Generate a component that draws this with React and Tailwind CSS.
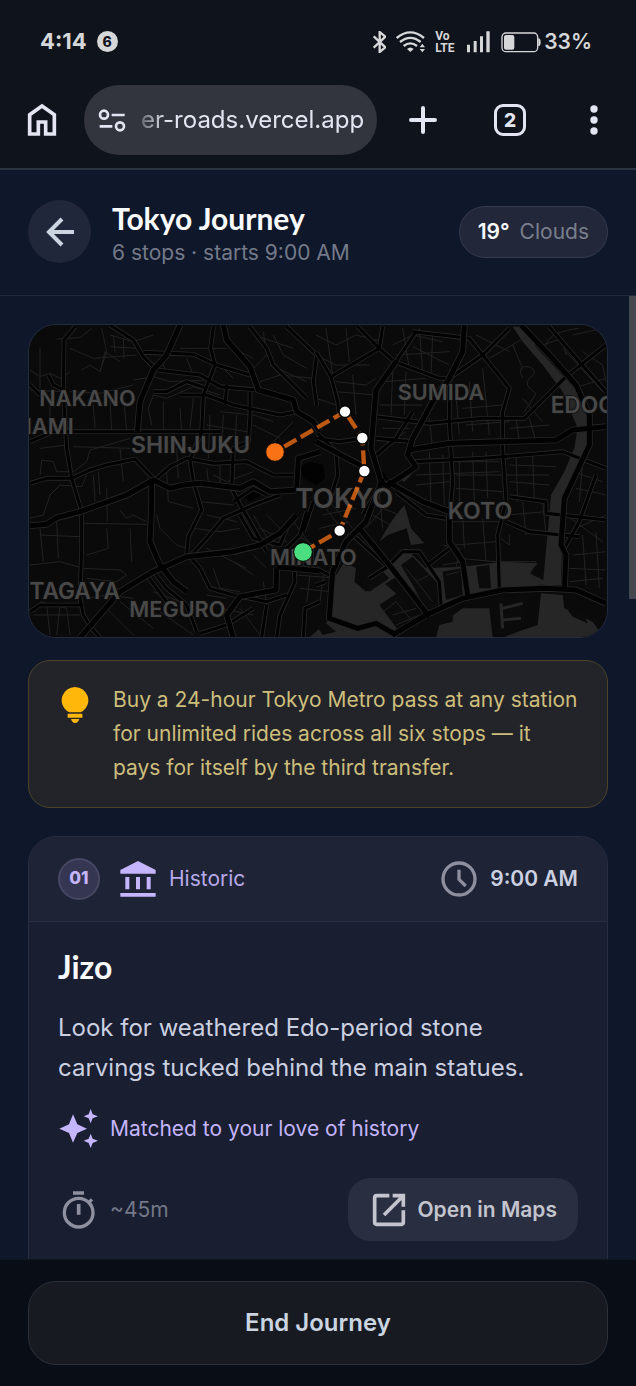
import React from "react";

const westStreets = [
  "M30 165 L60 185 L90 175 L120 190 L150 172", "M110 72 L180 68 L215 40", "M185 165 L210 150 L240 170 L255 110 L300 140",
  "M245 40 L260 110 L240 170", "M270 60 L340 80 L400 60", "M150 100 L220 130 L350 120", "M340 195 L400 185 L450 200 L560 195",
  "M395 330 L385 280 L400 240 L440 250 L520 215 L600 240", "M60 480 L65 435 L100 440 L110 470 L160 470 L200 440 L210 405 L280 385 L330 370",
  "M30 610 L70 600 L90 540 L120 510 L185 515 L200 480", "M300 585 L320 610 L340 600 L380 620", "M190 625 L380 628", "M260 520 L262 620",
  "M410 600 L420 640 L470 690 L500 700", "M30 750 L120 740 L190 760 L300 765 L320 780 L290 800 L200 790", "M60 660 L180 665",
  "M235 470 L240 540", "M440 470 L445 560 L520 580", "M30 225 L130 230", "M150 230 L240 235 L340 210", "M60 400 L140 390", "M160 395 L330 400",
  "M420 130 L440 170", "M480 100 L620 100", "M500 130 L520 180", "M620 90 L700 130", "M600 150 L640 190", "M730 50 L740 120 L700 160",
  "M760 60 L790 120 L860 160", "M700 60 L820 100", "M750 150 L860 200", "M720 200 L780 180 L880 190", "M600 290 L700 300 L760 320",
  "M560 330 L680 350", "M740 400 L820 320", "M700 330 L780 370", "M580 480 L620 500 L700 470", "M540 560 L640 570", "M560 600 L650 620",
  "M520 640 L600 650 L660 640", "M60 860 L140 880 L150 960", "M40 900 L180 900", "M80 870 L90 960", "M120 870 L110 960", "M200 850 L260 840 L340 850",
  "M260 880 L340 960", "M300 860 L400 940", "M400 830 L480 860", "M420 890 L520 960", "M560 840 L620 850", "M580 760 L600 820 L660 830",
  "M640 740 L700 780", "M700 720 L740 760", "M560 700 L680 760", "M720 640 L800 680", "M740 600 L780 640", "M600 880 L700 900", "M660 880 L720 960",
  "M730 800 L740 870", "M790 760 L860 740", "M820 620 L880 700", "M830 660 L880 690", "M60 100 L60 220", "M90 250 L90 340", "M220 270 L225 340",
  "M270 250 L275 350", "M310 240 L320 345", "M430 260 L430 350", "M480 280 L485 350", "M470 400 L475 490", "M560 460 L565 500", "M600 450 L600 510",
  "M220 480 L225 560", "M300 400 L310 500", "M260 640 L265 700 L200 720", "M330 640 L335 740", "M60 640 L70 740", "M110 620 L115 730",
  "M280 60 L285 110", "M310 70 L312 130", "M270 95 L350 100", "M520 250 L510 340", "M610 300 L605 380", "M650 300 L645 390", "M570 300 L565 430",
  "M700 600 L760 700", "M850 700 L850 760", "M880 700 L880 760", "M830 780 L950 790", "M840 820 L930 830", "M870 780 L860 860", "M910 780 L900 860",
];

const eastStreets = [
  "M0 60 L60 90 L120 60 L200 80", "M30 40 L50 180", "M90 40 L100 140", "M0 120 L60 150 L160 150", "M60 200 L150 210 L180 190", "M110 180 L120 300",
  "M60 230 L180 240", "M0 250 L60 270", "M230 90 L290 60 L380 80", "M260 40 L280 160", "M310 40 L320 170", "M350 60 L345 180", "M240 120 L400 110",
  "M290 95 L400 150", "M210 200 L330 190", "M230 170 L225 300", "M270 170 L265 300", "M190 270 L320 270", "M200 340 L280 340", "M200 400 L270 350",
  "M420 240 L430 360", "M460 200 L470 350", "M500 160 L520 360", "M440 280 L560 270", "M450 330 L580 320", "M340 310 L350 400", "M580 340 L700 330",
  "M600 310 L610 380", "M640 310 L660 380", "M480 60 L580 110", "M520 130 L640 60", "M590 90 L620 160", "M680 90 L740 70 L750 120",
  "M620 190 Q600 150 640 155 Q670 170 640 190 Q620 210 660 235 Q640 270 625 290", "M690 90 Q700 50 790 40", "M770 60 L860 40", "M800 110 L860 150",
  "M740 100 L860 230", "M620 250 L680 320", "M770 220 L870 190", "M860 150 L870 200", "M310 440 L550 440", "M300 480 L550 470", "M580 450 L720 455",
  "M300 510 L400 500", "M430 440 L430 560", "M470 410 L475 560", "M510 410 L515 550", "M340 410 L345 570", "M380 420 L385 570", "M600 420 L605 560",
  "M650 420 L655 560", "M420 480 L700 480", "M420 520 L560 530", "M580 500 L700 510", "M410 620 L550 620", "M440 600 L445 700", "M500 610 L510 740",
  "M420 690 L540 680", "M430 730 L540 740", "M555 670 L580 690 L580 660", "M550 740 L660 740 L640 780 L680 810", "M570 600 L690 590", "M620 560 L630 660",
  "M680 560 L690 660", "M770 470 L860 500", "M780 520 L870 540", "M800 440 L790 560", "M750 600 L860 680", "M780 640 L870 600", "M760 760 L870 765",
  "M770 720 L870 710", "M800 660 L810 810", "M840 650 L850 820", "M760 800 L860 790", "M150 560 L250 600", "M170 600 L240 640", "M190 540 L200 640",
  "M150 640 L210 570", "M30 580 L90 660", "M20 600 L120 580", "M10 640 L100 620", "M40 560 L110 640", "M380 690 L430 700 L420 760", "M380 750 L440 740",
  "M390 780 L430 770", "M230 760 L310 870", "M270 760 L350 860", "M300 800 L340 780", "M230 900 L300 880", "M240 930 L310 900", "M190 900 L240 860 L290 920",
];

const mediumWest = [
  "M165 35 L132 75 L130 230 L140 400 L155 490 L185 590 L185 700 L180 850 L190 900 L215 940 L240 968",
  "M270 30 L340 75 L370 125 L410 165 L540 180 L600 215 L710 225", "M370 112 L520 118 L590 150 L690 180", "M580 35 L572 100 L585 150 L550 240 L545 350 L510 435 L520 500 L545 585 L505 665 L500 720",
  "M30 380 L100 350 L350 350 L600 350", "M30 505 L80 490 L155 490 L210 465 L260 450 L345 432 L400 490", "M480 240 L560 240 L640 270 L780 300 L830 290",
  "M410 490 L450 455 L500 430 L580 445 L680 440 L760 480 L830 480", "M690 230 L690 300 L685 380 L640 400 L635 520 L660 570 L690 620 L740 710",
  "M800 35 L890 120 L880 200 L890 270", "M690 35 L740 100 L760 150 L860 250", "M505 730 L560 670 L610 610 L700 570 L780 540",
  "M400 770 L440 820 L500 870 L530 950", "M505 720 L540 760 L570 820 L640 840 L740 860 L800 840", "M30 890 L60 870 L190 870",
  "M660 600 L700 670 L780 690 L800 640", "M820 720 L825 800 L780 900 L770 968", "M740 870 L725 968", "M850 968 L855 880 L900 860", "M540 955 L620 930 L700 880",
  "M85 180 L100 210 L130 225", "M30 210 L60 240", "M640 560 L700 520 L740 540", "M860 590 L840 660 L800 700", "M880 560 L850 650",
  "M400 230 L440 230 L500 200 L560 220", "M620 210 L615 270", "M380 780 L440 860",
];

const mediumEast = [
  "M125 35 L190 100 L235 140 L370 190 L410 190", "M0 110 L45 185 L65 260 L70 300", "M45 185 L190 100 L200 35", "M300 50 L240 140 L185 215",
  "M290 50 L460 70 L500 120 L580 220 L560 290 L560 400 L570 560 L545 660 L550 820", "M400 190 L500 120 L580 40",
  "M180 305 L340 325 L500 310 L625 310 L750 185 L870 90", "M180 370 L290 380", "M0 370 L70 380 L140 370", "M400 200 L400 320 L410 500 L400 620",
  "M290 440 L500 430 L560 425 L740 410 L870 460", "M580 545 L690 560 L690 595 L870 615", "M570 620 L640 650 L790 665",
  "M700 35 L790 140 L870 230", "M140 450 L60 410 L0 350", "M60 410 L65 480 L40 560", "M240 530 L330 600 L390 610", "M840 480 L790 620 L745 700",
  "M110 660 L215 755 L260 710 L310 710 L370 800 L375 870", "M215 755 L160 790", "M335 750 L400 700", "M180 420 L240 370 L290 290",
  "M0 760 L40 780", "M0 810 L30 800", "M140 600 L170 550 L220 500",
];

const wideWest = [
  "M30 632 L80 628 L110 608 L180 590 L320 540 L400 495 L430 510 L450 520 L490 510 L540 505 L660 520 L700 500 L750 530 L830 525",
  "M480 30 L440 120 L400 165 L360 260 L352 350", "M395 490 L395 570 L390 680 L420 750 L460 800 L500 830",
  "M610 30 L620 75 L690 155 L715 225 L820 255 L830 290 L880 320 L900 350", "M180 968 L300 830 L400 770 L500 725 L640 710 L720 690 L780 655 L830 600",
  "M770 760 L768 825 L660 845 L620 900 L640 968", "M770 755 L900 768", "M830 520 L835 430 L900 410",
];

const wideEast = [
  "M445 30 L440 110 L400 190 L350 260 L290 370 L275 420 L300 455 L225 505", "M240 140 L180 225 L165 400 L195 500 L220 520",
  "M280 405 L400 385 L720 375 L770 345 L870 335", "M615 30 L700 120 L780 210 L820 300 L820 390 L745 550 L735 690 L750 720 L745 820",
  "M230 960 L330 900 L440 850 L560 825 L690 820 L780 825 L870 865", "M215 500 L320 560 L400 590", "M130 640 L220 750 L340 905",
  "M400 600 L400 680 L440 740 L455 840", "M200 490 L150 620 L90 680 L50 770 L40 910 L125 940 L180 925 L240 960", "M0 380 L150 460",
];

function Casing({ paths, width }) {
  return (
    <g fill="none" strokeLinejoin="round">
      <g stroke="#262626" strokeWidth={width + 5}>{paths.map((d) => <path key={d} d={d} />)}</g>
      <g stroke="#020202" strokeWidth={width}>{paths.map((d) => <path key={d} d={d} />)}</g>
    </g>
  );
}

function RouteMap() {
  const stops = [[975, 290], [1027, 369], [1033, 468], [959, 647]];
  return (
    <svg viewBox="27 30 1734 936" preserveAspectRatio="xMidYMid slice" className="block aspect-[578/312] w-full" role="img" aria-label="Route map of central Tokyo">
      <rect x="0" y="0" width="1800" height="1000" fill="#0a0a0a" />
      <g transform="translate(888 0)" fill="#262626">
        <path d="M590 35 L625 35 L660 95 L710 150 L775 220 L810 290 L825 340 L810 400 L775 470 L745 530 L740 620 L735 810 L680 815 L700 600 L705 540 L745 470 L775 400 L785 340 L740 230 L680 150 L620 80Z" />
        <path d="M85 740 L120 760 L115 800 L150 830 L200 800 L290 880 L240 968 L-20 968 L0 950 L45 910 L55 790Z" />
        <path d="M150 790 L200 755 L240 740 L270 700 L290 720 L330 760 L440 755 L560 740 L665 745 L640 775 L700 805 L440 850 L340 880 L250 780 L170 830Z" />
        <path d="M370 930 L440 880 L520 880 L530 968 L360 968Z M675 835 L740 840 L745 880 L830 920 L865 968 L560 968 L620 945 L665 930Z" />
        <path d="M265 570 L285 640 L325 685 L285 690 L272 640 L215 660 L190 680 L225 620Z M240 490 L290 475 L265 500Z" />
        <path fill="#0b0b0b" d="M130 800 L195 765 L220 790 L160 830Z M255 750 L290 725 L370 810 L380 880 L330 880Z M380 770 L435 760 L440 840 L390 855Z M480 755 L520 750 L525 820 L490 820Z M540 850 L640 838 L630 940 L545 960Z M190 870 L250 830 L310 900 L250 950Z M355 890 L410 870 L410 920 L370 930Z M745 870 L800 890 L815 925 L770 905Z M0 930 L30 925 L60 950 L20 960Z" />
        <path stroke="#262626" strokeWidth="9" fill="none" d="M560 880 L620 865 M560 915 L615 910 M555 865 L560 940" />
      </g>
      <g fill="none" stroke="#222" strokeWidth="3">
        {westStreets.map((d) => <path key={d} d={d} />)}
        <g transform="translate(888 0)">{eastStreets.map((d) => <path key={d} d={d} />)}</g>
      </g>
      <path fill="#020202" d="M665 540 L705 523 L725 540 L690 560Z M840 455 L870 440 L910 450 L915 490 L890 510 L850 490Z M1060 475 L1090 470 L1115 510 L1085 515Z" />
      <Casing paths={mediumWest} width={9} />
      <g transform="translate(888 0)"><Casing paths={mediumEast} width={9} /></g>
      <Casing paths={wideWest} width={15} />
      <g transform="translate(888 0)"><Casing paths={wideEast} width={15} /></g>
      <g fill="#484848" stroke="#101010" strokeWidth="5" paintOrder="stroke" fontFamily="Inter, sans-serif" fontWeight="600" fontSize="65">
        <text x="58" y="272">NAKANO</text>
        <text x="161" y="358" textAnchor="end">NAMI</text>
        <text x="333" y="413" fontSize="69">SHINJUKU</text>
        <text x="300" y="853" textAnchor="end" fontSize="68">TAGAYA</text>
        <text x="328" y="907">MEGURO</text>
        <text x="826" y="578" fontSize="83">TOKYO</text>
        <text x="750" y="749" fontSize="65">MINATO</text>
        <text x="1133" y="254">SUMIDA</text>
        <text x="1592" y="293" fontSize="68">EDOGAWA</text>
        <text x="1283" y="611" fontSize="69">KOTO</text>
      </g>
      <path d="M765 411 L975 290 L1027 369 L1033 468 L959 647 L849 711" fill="none" stroke="#f97316" strokeOpacity=".75" strokeWidth="13" strokeDasharray="42 15" strokeDashoffset="-32" strokeLinejoin="round" />
      {stops.map(([x, y]) => <circle key={`${x}-${y}`} cx={x} cy={y} r="18" fill="#fff" stroke="#080808" strokeWidth="5" />)}
      <circle cx="765" cy="411" r="28" fill="#f97316" stroke="#080808" strokeWidth="3" />
      <circle cx="849" cy="711" r="28" fill="#4ade80" stroke="#080808" strokeWidth="3" />
    </svg>
  );
}

function StatusBar() {
  return (
    <div className="flex h-[85px] items-center pr-11 pb-[2px] pl-10 text-[#d6d7d9]">
      <span className="text-[22px] font-bold">4:14</span>
      <span className="ml-[10px] flex size-[21px] items-center justify-center rounded-full bg-[#d6d7d9] text-sm font-extrabold text-[#0f131b]">6</span>
      <div className="ml-auto flex items-center gap-[10px]">
        <svg viewBox="165 92 39 66" className="h-[22px] w-[13px]" fill="none" stroke="currentColor" strokeWidth="7" aria-label="Bluetooth"><path d="M167 108 L202 141 L185 155 L185 95 L202 109 L167 142" /></svg>
        <svg viewBox="234 92 87 66" className="h-[22px] w-[29px]" aria-label="Wi-Fi">
          <g fill="none" stroke="currentColor" strokeWidth="7"><path d="M236 113 Q277 79 318 113" /><path d="M246 125 Q277 100 308 125" /><path d="M257 137 Q277 121 297 137" /></g>
          <path d="M267 146 Q277 137 287 146 L277 155Z M305 141 L313 130 L321 141Z M305 146 L313 156 L321 146Z" fill="currentColor" />
        </svg>
        <span className="flex w-5 flex-col font-['Roboto'] text-[12px] leading-3 font-bold"><span>Vo</span><span>LTE</span></span>
        <svg viewBox="441 92 75 66" className="h-[22px] w-[25px]" fill="currentColor" aria-label="Signal"><path d="M447 133h9v23h-9z M467 122h9v34h-9z M486 108h9v48h-9z M505 93h10v63h-10z" /></svg>
        <div className="flex items-center gap-[3px]">
          <svg viewBox="546 92 123 66" className="h-[22px] w-[41px]" aria-label="Battery"><rect x="552" y="98" width="107" height="56" rx="12" fill="none" stroke="currentColor" strokeWidth="4" /><rect x="558" y="104" width="31" height="44" rx="6" fill="currentColor" /><path d="M661 114 Q668 114 668 126 Q668 138 661 138Z" fill="currentColor" /></svg>
          <span className="text-[21px] font-semibold">33%</span>
        </div>
      </div>
    </div>
  );
}

function BrowserBar() {
  return (
    <div className="flex items-center border-b-2 border-[#2b323f] pr-[30px] pb-[13px] pl-[27px] text-[#e3e6f2]">
      <button aria-label="Home"><svg viewBox="81 309 90 102" className="block h-[34px] w-[30px]" fill="none" stroke="currentColor" strokeWidth="11"><path d="M89 402 V344 L126 318 L163 344 V402 H137 V366 H115 V402Z" /></svg></button>
      <div className="ml-[27px] flex h-[70px] min-w-0 flex-1 items-center rounded-full bg-[#32353e] pr-[13px] pl-[14px]">
        <svg viewBox="294 321 84 72" className="h-6 w-7 shrink-0" fill="none" stroke="currentColor" strokeWidth="8"><circle cx="312" cy="341" r="12" /><path d="M335 342H374 M299 376H337" /><circle cx="360" cy="376" r="12" /></svg>
        <input aria-label="Address" readOnly value="er-roads.vercel.app" className="ml-[15px] w-full min-w-0 bg-transparent text-[24px] outline-none [mask-image:linear-gradient(to_right,rgba(0,0,0,.3),#000_24px)]" />
      </div>
      <button aria-label="New tab" className="ml-[31px]"><svg viewBox="0 0 30 30" className="block size-[30px]" stroke="currentColor" strokeWidth="4" strokeLinecap="round"><path d="M15 3V27M3 15H27" /></svg></button>
      <button aria-label="Tabs" className="ml-14 flex size-8 items-center justify-center rounded-[9px] border-[3px] border-[#e3e6f2] text-[19px] leading-none font-extrabold">2</button>
      <button aria-label="More" className="ml-14 flex w-6 justify-center"><svg viewBox="0 0 10 30" className="h-[30px] w-[10px]" fill="currentColor"><circle cx="5" cy="4" r="3.700" /><circle cx="5" cy="15" r="3.700" /><circle cx="5" cy="26" r="3.700" /></svg></button>
    </div>
  );
}

export default function App() {
  return (
    <div className="flex h-screen flex-col overflow-hidden bg-[#0f172a] font-['Inter',sans-serif] [font-optical-sizing:none]">
      <div className="shrink-0 bg-[#0f131b]">
        <StatusBar />
        <BrowserBar />
      </div>

      <header className="flex h-[126px] shrink-0 items-center border-b border-[#202b3a] px-7 pb-[2px]">
        <button aria-label="Back" className="flex size-[63px] shrink-0 items-center justify-center rounded-full bg-[#21273a] text-[#cbd5e1]">
          <svg viewBox="0 0 30 30" className="size-[30px]" fill="none" stroke="currentColor" strokeWidth="4"><path d="M29 15H4M17 2L4 15L17 28" /></svg>
        </button>
        <div className="ml-[21px] flex min-w-0 flex-1 flex-col gap-1 pt-[6px]">
          <h1 className="font-['Lato'] text-[30px] leading-[32px] font-bold text-[#f8fafc]">Tokyo Journey</h1>
          <p className="text-[21px] leading-[30px] text-[#747a89]">6 stops · starts 9:00 AM</p>
        </div>
        <div className="flex h-[52px] items-center gap-[10px] rounded-full border border-[#343b4c] bg-[#222739] px-[18px] text-[21px]">
          <span className="font-semibold text-[#f8fafc]">19°</span>
          <span className="text-[#7a7f8e]">Clouds</span>
        </div>
      </header>

      <div className="relative min-h-0 flex-1">
        <main className="h-full overflow-y-auto px-7 pt-7 [scrollbar-width:none]">
          <section className="overflow-hidden rounded-[28px] border border-[#232b3a]"><RouteMap /></section>

          <aside className="mt-[22px] flex rounded-[22px] border border-[#4c4329] bg-[#232429] py-[22px] pr-7 pl-8">
            <svg viewBox="123 108 84 114" className="mt-[3px] h-[38px] w-7 shrink-0" fill="#ffb80a"><path d="M165 111 A40 40 0 0 1 189 183 L182 187 H148 L141 183 A40 40 0 0 1 165 111Z M143 191 H187 V203 H143Z M153 207 H178 Q174 219 165 219 Q157 219 153 207Z" /></svg>
            <p className="ml-6 text-[21px] leading-[34px] text-[#cdbe7b]">Buy a 24-hour Tokyo Metro pass at any station for unlimited rides across all six stops — it pays for itself by the third transfer.</p>
          </aside>

          <article className="mt-7 overflow-hidden rounded-[28px] border border-[#282e41] bg-[#191e31]">
            <div className="flex h-[85px] items-center border-b border-[#282e41] bg-[#1e2335] px-[29px]">
              <span className="flex size-[42px] items-center justify-center rounded-full border-2 border-[#474763] bg-[#353651] text-[17px] font-extrabold text-[#c4b5fd]">01</span>
              <svg viewBox="297 99 114 114" className="ml-[19px] size-[38px]" fill="#c4b5fd"><path d="M354 102 L407 129 V140 H301 V129Z M316 150H328V187H316Z M348 150H360V187H348Z M380 150H392V187H380Z M301 198H407V209H301Z" /></svg>
              <span className="ml-3 text-[21px] text-[#b7aaea]">Historic</span>
              <svg viewBox="361 104 114 114" className="ml-auto size-[38px] text-[#8e90a0]" fill="none" stroke="currentColor" strokeWidth="10"><circle cx="418" cy="161" r="48" /><path d="M418 133V162L438 182" /></svg>
              <time className="ml-3 text-[21px] font-semibold text-[#cbd0e1]">9:00 AM</time>
            </div>
            <div className="px-[29px] pt-[26px] pb-8">
              <h2 className="font-['Lato'] text-[32px] leading-[38px] font-bold text-[#f8fafc]">Jizo</h2>
              <p className="mt-[22px] text-[24px] leading-[40px] text-[#cbd0e1]">Look for weathered Edo-period stone carvings tucked behind the main statues.</p>
              <div className="mt-5 flex items-center gap-[10px] text-[21px] text-[#c4b5fd]">
                <svg viewBox="114 54 126 126" className="size-[42px]" fill="currentColor"><path d="M159 73 L172 103 L201 116 L172 129 L159 158 L147 129 L118 116 L147 103Z M212 57 L218 73 L234 79 L218 85 L212 100 L206 85 L191 79 L206 73Z M212 131 L218 146 L234 152 L218 159 L212 174 L206 159 L191 152 L206 146Z" /></svg>
                <span>Matched to your love of history</span>
              </div>
              <div className="mt-7 flex items-center justify-between">
                <div className="flex items-center gap-[10px] text-[21px] text-[#747887]">
                  <svg viewBox="114 291 126 126" className="size-[42px] text-[#8e90a0]" fill="none" stroke="currentColor" strokeWidth="10"><circle cx="176" cy="362" r="43" /><path d="M159 303H192M176 336V368" strokeWidth="11" /><path d="M205 333L216 322" /></svg>
                  <span>~45m</span>
                </div>
                <a href="#maps" className="flex h-[63px] items-center gap-2 rounded-[22px] bg-[#292e40] px-[21px] text-[21px] font-semibold text-[#c3c4ce]">
                  <svg viewBox="150 116 120 120" className="size-10" fill="none" stroke="currentColor" strokeWidth="11"><path d="M211 133H173Q167 133 167 139V213Q167 219 173 219H247Q253 219 253 213V177" /><path d="M221 133H253V166M252 134L195 191" /></svg>
                  Open in Maps
                </a>
              </div>
              <div className="mt-7 border-t border-[#282e41]" />
            </div>
          </article>
        </main>
        <div className="absolute top-0 right-0 h-[303px] w-[7px] bg-[#44474e]" />
      </div>

      <footer className="shrink-0 border-t border-[#10161d] bg-[#090d15] px-7 py-[21px]">
        <button className="h-[84px] w-full rounded-[28px] border border-[#2c3037] bg-[#171a21] text-[24px] font-semibold text-[#cbd5e1]">End Journey</button>
      </footer>
    </div>
  );
}
